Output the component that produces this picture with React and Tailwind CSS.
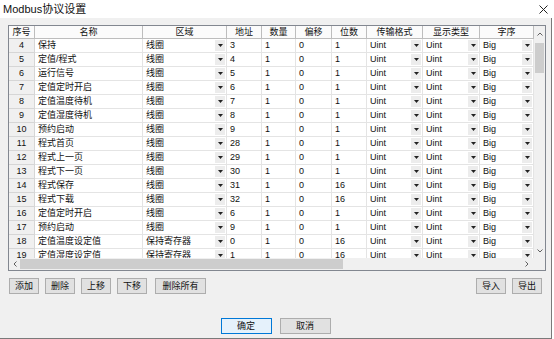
import React from 'react';

const rows = [
  ['4', '保持', '线圈', '3', '1', '0', '1'],
  ['5', '定值/程式', '线圈', '4', '1', '0', '1'],
  ['6', '运行信号', '线圈', '5', '1', '0', '1'],
  ['7', '定值定时开启', '线圈', '6', '1', '0', '1'],
  ['8', '定值温度待机', '线圈', '7', '1', '0', '1'],
  ['9', '定值湿度待机', '线圈', '8', '1', '0', '1'],
  ['10', '预约启动', '线圈', '9', '1', '0', '1'],
  ['11', '程式首页', '线圈', '28', '1', '0', '1'],
  ['12', '程式上一页', '线圈', '29', '1', '0', '1'],
  ['13', '程式下一页', '线圈', '30', '1', '0', '1'],
  ['14', '程式保存', '线圈', '31', '1', '0', '16'],
  ['15', '程式下载', '线圈', '32', '1', '0', '16'],
  ['16', '定值定时开启', '线圈', '6', '1', '0', '1'],
  ['17', '预约启动', '线圈', '9', '1', '0', '1'],
  ['18', '定值温度设定值', '保持寄存器', '0', '1', '0', '16'],
  ['19', '定值湿度设定值', '保持寄存器', '1', '1', '0', '16'],
];

const headers = ['序号', '名称', '区域', '地址', '数量', '偏移', '位数', '传输格式', '显示类型', '字序'];

const cols = 'grid grid-cols-[26px_108px_84px_35px_34px_36px_35px_56px_57px_54px]';

function Combo({ value }) {
  return (
    <div className="flex h-[14px] items-stretch border-r border-b border-[#e4e4e4] bg-white">
      <span className="flex-1 pl-[3px] leading-[13px]">{value}</span>
      <span className="my-[1px] mr-[1px] flex w-[10px] items-center justify-center bg-[#ececec]">
        <svg width="5" height="3" viewBox="0 0 5 3">
          <path d="M0 0h5L2.5 3z" fill="#222" />
        </svg>
      </span>
    </div>
  );
}

function Cell({ value }) {
  return (
    <div className="h-[14px] border-r border-b border-[#e4e4e4] bg-white pl-[3px] leading-[13px]">{value}</div>
  );
}

function Btn({ label, className = 'w-[30px]', focus }) {
  return (
    <button
      className={`${className} block h-[16px] shrink-0 text-[9px] leading-[14px] text-[#111] ${
        focus ? 'border border-[#0078d7] bg-[#e5f1fb]' : 'border border-[#adadad] bg-[#e1e1e1]'
      }`}
    >
      {label}
    </button>
  );
}

export default function App() {
  return (
    <div
      className="relative h-[339px] w-[554px] overflow-hidden bg-white text-[#111]"
      style={{ fontFamily: '"Liberation Sans", "Noto Sans CJK SC", sans-serif' }}
    >
      {/* title bar */}
      <div className="flex h-[18px] items-center justify-between pl-[3px] pr-[6px]">
        <span className="text-[11px] leading-none">Modbus协议设置</span>
        <svg width="9" height="9" viewBox="0 0 9 9">
          <path d="M0.5 0.5l8 8M8.5 0.5l-8 8" stroke="#222" strokeWidth="1" />
        </svg>
      </div>

      <div className="h-[321px] w-[552px] border-r border-b border-[#7a7a7a] bg-[#f0f0f0] pt-[7px]">
        {/* grid frame */}
        <div className="ml-[8px] h-[246px] w-[538px] border border-[#828790] bg-white text-[9px]">
          <div className="flex h-[232px]">
            <div className="h-[232px] w-[525px] overflow-hidden">
              <div className={`${cols} h-[13px] bg-[#fbfbfb]`}>
                {headers.map((h) => (
                  <div key={h} className="border-r border-b border-[#bdbdbd] text-center leading-[12px]">
                    {h}
                  </div>
                ))}
              </div>
              {rows.map((r) => (
                <div key={r[0]} className={cols}>
                  <div className="h-[14px] border-r border-b border-[#d6d6d6] bg-[#f0f0f0] text-center leading-[13px]">
                    {r[0]}
                  </div>
                  <Cell value={r[1]} />
                  <Combo value={r[2]} />
                  <Cell value={r[3]} />
                  <Cell value={r[4]} />
                  <Cell value={r[5]} />
                  <Cell value={r[6]} />
                  <Combo value="Uint" />
                  <Combo value="Uint" />
                  <Combo value="Big" />
                </div>
              ))}
            </div>
            {/* vertical scrollbar */}
            <div className="flex h-[232px] w-[11px] flex-col items-center bg-[#f0f0f0]">
              <div className="flex h-[15px] items-center justify-center">
                <svg width="6" height="4" viewBox="0 0 6 4">
                  <path d="M0.5 3.5L3 1l2.5 2.5" stroke="#606060" fill="none" />
                </svg>
              </div>
              <div className="mt-[2px] h-[30px] w-[9px] bg-[#cdcdcd]" />
              <div className="flex-1" />
              <div className="flex h-[15px] items-center justify-center">
                <svg width="6" height="4" viewBox="0 0 6 4">
                  <path d="M0.5 0.5L3 3l2.5-2.5" stroke="#606060" fill="none" />
                </svg>
              </div>
            </div>
          </div>
          {/* horizontal scrollbar */}
          <div className="flex h-[12px]">
            <div className="flex w-[525px] items-center bg-[#f0f0f0]">
              <div className="flex w-[11px] justify-center">
                <svg width="4" height="6" viewBox="0 0 4 6">
                  <path d="M3.5 0.5L1 3l2.5 2.5" stroke="#606060" fill="none" />
                </svg>
              </div>
              <div className="h-[10px] w-[323px] bg-[#cdcdcd]" />
              <div className="flex-1" />
              <div className="flex w-[14px] justify-center">
                <svg width="4" height="6" viewBox="0 0 4 6">
                  <path d="M0.5 0.5L3 3l-2.5 2.5" stroke="#606060" fill="none" />
                </svg>
              </div>
            </div>
            <div className="w-[11px] bg-[#f0f0f0]" />
          </div>
        </div>

        {/* action buttons */}
        <div className="mt-[7px] flex h-[16px] items-start px-[9px]">
          <Btn label="添加" />
          <Btn label="删除" className="ml-[6px] w-[30px]" />
          <Btn label="上移" className="ml-[6px] w-[30px]" />
          <Btn label="下移" className="ml-[6px] w-[30px]" />
          <Btn label="删除所有" className="ml-[8px] w-[51px]" />
          <div className="flex-1" />
          <Btn label="导入" />
          <Btn label="导出" className="ml-[6px] w-[30px]" />
        </div>

        <div className="mt-[24px] flex h-[16px] items-start justify-center gap-[8px]">
          <Btn label="确定" className="w-[51px]" focus />
          <Btn label="取消" className="w-[51px]" />
        </div>
      </div>
    </div>
  );
}
